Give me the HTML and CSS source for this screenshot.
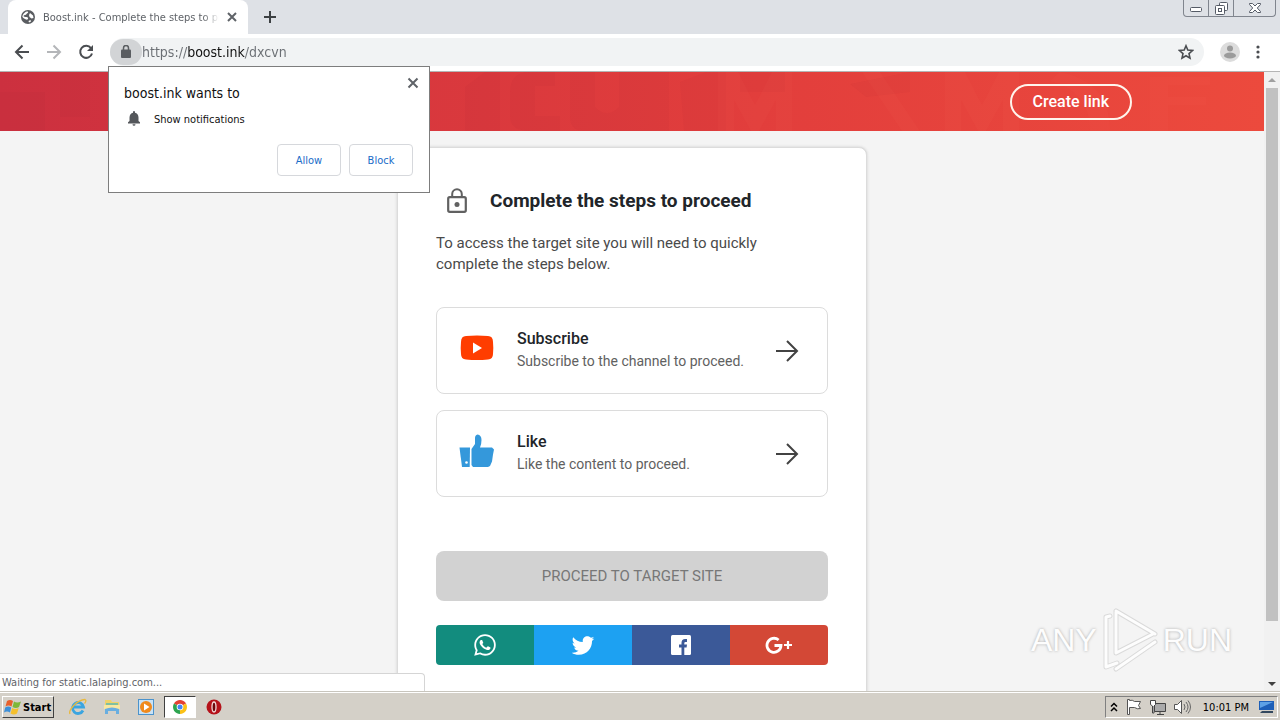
FILE: index.html
```html
<!DOCTYPE html>
<html lang="en">

<head>
  <meta charset="UTF-8">
  <meta name="viewport" content="width=device-width, initial-scale=1.0">
  <title>Boost.ink - Complete the steps to proceed</title>
  <link rel="stylesheet" href="styles.css">
</head>

<body>
  <header class="tabstrip">
    <div class="tab">
      <svg class="favicon" viewBox="0 0 14 14"><circle cx="7" cy="7" r="7" fill="#5a5d61"/><path d="M6 1.500c2 0 1 1.500 0 2s-.5 1.500-2 1.500S2 6.500 3.500 6.800s3 0 3.500 1.200-1 2-2 1.500S2 8 1.500 7 3 2 6 1.500zM9 3l3 2.500.5 2.500-2 .5L8.500 7 8 5zM7.500 11l2-1 .5 1.500-2 1z" fill="#fff"/></svg>
      <span class="tab-title">Boost.ink - Complete the steps to proceed</span>
      <button class="icon-btn" aria-label="Close tab"><svg width="10" height="10" viewBox="0 0 10 10"><path d="M1 1l8 8M9 1l-8 8" stroke="#5f6368" stroke-width="2"/></svg></button>
    </div>
    <button class="icon-btn new-tab" aria-label="New tab"><svg width="12" height="12" viewBox="0 0 12 12"><path d="M6 0v12M0 6h12" stroke="#3c4043" stroke-width="2"/></svg></button>
    <div class="window-btns">
      <button class="win-btn" aria-label="Minimize"><svg width="12" height="10" viewBox="0 0 12 10"><rect x=".5" y="4.500" width="11" height="4" rx="1" fill="#fff" stroke="#555b66"/></svg></button>
      <button class="win-btn" aria-label="Restore"><svg width="13" height="13" viewBox="0 0 13 13"><g fill="#fff" stroke="#555b66"><rect x="4.500" y=".5" width="8" height="8" rx="1"/><rect x=".5" y="3.500" width="9" height="9" rx="1"/><rect x="3.500" y="6.500" width="3" height="3"/></g></svg></button>
      <button class="win-btn win-close" aria-label="Close"><svg width="12" height="12" viewBox="0 0 12 12"><path d="M.5 1.500h3L6 4l2.500-2.500h3v1L8.300 6l3.200 3.500v1h-3L6 8l-2.500 2.500h-3v-1L3.700 6 .5 2.500z" fill="#fff" stroke="#555b66"/></svg></button>
    </div>
  </header>

  <nav class="toolbar">
    <button class="icon-btn" aria-label="Back"><svg width="16" height="16" viewBox="0 0 16 16"><path d="M15 8H2M8.500 1.500L2 8l6.500 6.500" fill="none" stroke="#4a4d51" stroke-width="2"/></svg></button>
    <button class="icon-btn" aria-label="Forward"><svg width="16" height="16" viewBox="0 0 16 16"><path d="M1 8h13M7.500 1.500L14 8l-6.500 6.500" fill="none" stroke="#b4b6b9" stroke-width="2"/></svg></button>
    <button class="icon-btn" aria-label="Reload"><svg width="16" height="16" viewBox="0 0 16 16"><path d="M13 4.200A6 6 0 1 0 14 9.500" fill="none" stroke="#4a4d51" stroke-width="2"/><path d="M15 1v6H9z" fill="#4a4d51"/></svg></button>
    <div class="omnibox">
      <button class="site-info" aria-label="View site information"><svg width="10" height="13" viewBox="0 0 10 13"><rect y="4.500" width="10" height="8.500" rx="1" fill="#5a5d61"/><path d="M2.500 5V3a2.500 2.500 0 0 1 5 0v2" fill="none" stroke="#5a5d61" stroke-width="1.500"/></svg></button>
      <input class="url" type="text" value="https://boost.ink/dxcvn" aria-label="Address">
      <button class="icon-btn" aria-label="Bookmark this page"><svg width="16" height="16" viewBox="0 0 16 16"><path d="M8 1.800l1.800 4.300 4.700.4-3.500 3.100 1 4.600L8 11.800l-4 2.400 1-4.600L1.500 6.500l4.700-.4z" fill="none" stroke="#4a4d51" stroke-width="1.600"/></svg></button>
    </div>
    <button class="icon-btn" aria-label="Profile"><svg width="20" height="20" viewBox="0 0 20 20"><circle cx="10" cy="10" r="10" fill="#dcdcdc"/><circle cx="10" cy="6.500" r="3" fill="#9b9b9b"/><ellipse cx="10" cy="13.500" rx="6" ry="3" fill="#9b9b9b"/></svg></button>
    <button class="icon-btn" aria-label="Menu"><svg width="4" height="14" viewBox="0 0 4 14"><g fill="#4a4d51"><circle cx="2" cy="2" r="1.600"/><circle cx="2" cy="7" r="1.600"/><circle cx="2" cy="12" r="1.600"/></g></svg></button>

    <div class="permission" role="dialog" aria-label="boost.ink wants to show notifications">
      <div class="permission-head">
        <span>boost.ink wants to</span>
        <button class="icon-btn permission-close" aria-label="Close"><svg width="12" height="12" viewBox="0 0 12 12"><path d="M1.500 1.500l9 9M10.500 1.500l-9 9" stroke="#5f6368" stroke-width="2"/></svg></button>
      </div>
      <div class="permission-row">
        <svg width="14" height="16" viewBox="0 0 14 16"><path d="M1 12.500v-1.200L2.500 10V6.500C2.500 4 4 2.300 6 1.800V1a1 1 0 0 1 2 0v.8c2 .5 3.500 2.200 3.500 4.700V10l1.500 1.300v1.200zM5.500 13.300h3a1.500 1.500 0 0 1-3 0z" fill="#54575b"/></svg>
        <span>Show notifications</span>
      </div>
      <div class="permission-actions">
        <button class="permission-btn">Allow</button>
        <button class="permission-btn">Block</button>
      </div>
    </div>
  </nav>

  <div class="viewport">
    <main class="page">
      <div class="banner">
        <svg class="banner-art" viewBox="0 0 1264 59" preserveAspectRatio="none"><g fill="#7d1028" opacity=".04"><path d="M0 20h45v39H0zM60 0h30v45H60zM465 59V15l20-15h15v59zM510 20q0-20 20-20h25v14h-20v30h25v15h-30q-20 0-20-15zM570 0h25v35q12 12 24 0V0h50v59h-85q-14 0-14-15zM680 10l26-10h20v59h-42zM740 0h45v20h-45zM850 12l60-12v20l-44 5z"/></g><g fill="#ff7a60" opacity=".06"><path d="M718 0h20l17 33L772 0h20v59h-16V28l-17 31h-8l-17-31v31h-16zM945 0h20l17 33L999 0h20v59h-16V28l-17 31h-8l-17-31v31h-16zM880 0l40 59h-18L862 0zM1060 0q50 10 50 59h-20q0-40-40-50zM1150 5h60v8h-42v12h38v8h-38v26h-18z"/></g></svg>
        <div class="container">
          <a class="create-link" href="#">Create link</a>
        </div>
      </div>

      <section class="card">
        <div class="card-head">
          <svg width="22" height="26" viewBox="0 0 22 26"><rect x="2.200" y="9.200" width="17.600" height="14.600" rx="1.500" fill="none" stroke="#616161" stroke-width="2.200"/><path d="M6.200 9V6a4.800 4.800 0 0 1 9.600 0v3" fill="none" stroke="#616161" stroke-width="2"/><circle cx="11" cy="16.500" r="2.500" fill="#616161"/></svg>
          <h1>Complete the steps to proceed</h1>
        </div>
        <p class="intro">To access the target site you will need to quickly complete the steps below.</p>

        <a class="step" href="#">
          <svg class="step-icon" viewBox="0 0 36 36"><path d="M7 6Q18 5 29 6q5 0 5 6 .6 6 0 12 0 5-5 5.500-11 1-22 0-5-.5-5-5.500-.6-6 0-12 0-6 5-6z" fill="#ff3d00"/><path d="M14 12.500v11l9-5.500z" fill="#fff"/></svg>
          <span class="step-text">
            <strong>Subscribe</strong>
            <span>Subscribe to the channel to proceed.</span>
          </span>
          <svg class="arrow" viewBox="0 0 24 24"><path d="M1 12h21M12 2l10 10-10 10" fill="none" stroke="#424242" stroke-width="2"/></svg>
        </a>
        <a class="step" href="#">
          <svg class="step-icon" viewBox="0 0 36 36"><path d="M.5 14.500H11l-.3 19.500H3z" fill="#3498db"/><path d="M12.500 16l3.500-5V5q0-3 2.500-3.500 4 .5 4 5.500 0 4-1.500 7.500h12l2 2-1 5-1 7-2 4.500-2 1H14l-1.500-2z" fill="#3498db"/><circle cx="7.500" cy="29.500" r="1.300" fill="#fff"/></svg>
          <span class="step-text">
            <strong>Like</strong>
            <span>Like the content to proceed.</span>
          </span>
          <svg class="arrow" viewBox="0 0 24 24"><path d="M1 12h21M12 2l10 10-10 10" fill="none" stroke="#424242" stroke-width="2"/></svg>
        </a>

        <button class="proceed" disabled>PROCEED TO TARGET SITE</button>

        <div class="share">
          <a class="whatsapp" href="#" aria-label="Share on WhatsApp"><svg width="26" height="26" viewBox="0 0 24 24"><path fill="#fff" d="M12.040 2C6.580 2 2.130 6.450 2.130 11.910C2.130 13.660 2.590 15.360 3.450 16.860L2.050 22L7.300 20.620C8.750 21.410 10.380 21.830 12.040 21.830C17.500 21.830 21.950 17.380 21.950 11.920C21.950 9.270 20.920 6.780 19.050 4.910C17.180 3.030 14.690 2 12.040 2M12.050 3.670C14.250 3.670 16.310 4.530 17.870 6.090C19.420 7.650 20.280 9.720 20.280 11.920C20.280 16.460 16.580 20.150 12.040 20.150C10.560 20.150 9.110 19.760 7.850 19L7.550 18.830L4.430 19.650L5.260 16.610L5.060 16.290C4.240 15 3.800 13.470 3.800 11.910C3.810 7.370 7.500 3.670 12.050 3.670M8.530 7.330C8.370 7.330 8.100 7.390 7.870 7.640C7.650 7.890 7 8.500 7 9.710C7 10.930 7.890 12.100 8 12.270C8.140 12.440 9.760 14.940 12.250 16C12.840 16.270 13.300 16.420 13.660 16.530C14.250 16.720 14.790 16.690 15.220 16.630C15.700 16.560 16.680 16.030 16.890 15.450C17.100 14.870 17.100 14.380 17.040 14.270C16.970 14.170 16.810 14.110 16.560 14C16.310 13.860 15.090 13.260 14.870 13.180C14.640 13.100 14.500 13.060 14.310 13.300C14.150 13.550 13.670 14.110 13.530 14.270C13.380 14.440 13.240 14.460 13 14.340C12.740 14.210 11.940 13.950 11 13.110C10.260 12.450 9.770 11.640 9.620 11.390C9.500 11.150 9.610 11 9.730 10.890C9.840 10.780 10 10.600 10.100 10.450C10.230 10.310 10.270 10.200 10.350 10.040C10.430 9.870 10.390 9.730 10.330 9.610C10.270 9.500 9.770 8.260 9.560 7.770C9.360 7.290 9.160 7.350 9 7.340C8.860 7.340 8.700 7.330 8.530 7.330Z"/></svg></a>
          <a class="twitter" href="#" aria-label="Share on Twitter"><svg width="26" height="26" viewBox="0 0 24 24"><path fill="#fff" d="M22.460 6c-.77.35-1.600.58-2.460.69.88-.53 1.560-1.370 1.880-2.380-.83.5-1.750.85-2.720 1.050C18.370 4.500 17.260 4 16 4c-2.350 0-4.270 1.920-4.270 4.290 0 .34.04.67.11.98C8.280 9.090 5.110 7.380 3 4.790c-.37.63-.58 1.370-.58 2.150 0 1.490.75 2.810 1.910 3.560-.71 0-1.370-.2-1.950-.5v.03c0 2.080 1.480 3.820 3.440 4.210a4.220 4.220 0 0 1-1.930.07 4.280 4.280 0 0 0 4 2.980 8.520 8.520 0 0 1-5.330 1.840c-.34 0-.68-.02-1.020-.06C3.440 20.290 5.700 21 8.120 21 16 21 20.330 14.460 20.330 8.790c0-.19 0-.37-.01-.56.84-.6 1.560-1.360 2.140-2.230z"/></svg></a>
          <a class="facebook" href="#" aria-label="Share on Facebook"><svg width="20" height="20" viewBox="0 0 20 20"><rect width="20" height="20" rx="1.500" fill="#fff"/><path d="M10.500 20v-7.500H8V9.500h2.500V7.800Q10.500 4 14.200 4H16v3h-1.500q-1.200 0-1.200 1.300v1.200H16l-.4 3h-2.300V20z" fill="#3b5998"/></svg></a>
          <a class="google" href="#" aria-label="Share on Google+"><svg width="28" height="18" viewBox="0 0 28 18"><path d="M13.600 4A7 7 0 1 0 16 9.500H9.500" fill="none" stroke="#fff" stroke-width="2.800"/><path d="M23 5v8M19 9h8" stroke="#fff" stroke-width="2.200"/></svg></a>
        </div>
      </section>
    </main>

    <div class="scrollbar">
      <svg width="16" height="16" viewBox="0 0 16 16"><path d="M4 10l4-4 4 4z" fill="#a0a0a0"/></svg>
      <div class="thumb"></div>
      <svg width="16" height="16" viewBox="0 0 16 16"><path d="M4 6l4 4 4-4z" fill="#404040"/></svg>
    </div>

    <div class="status">Waiting for static.lalaping.com...</div>

    <div class="watermark">
      <span>ANY</span>
      <svg width="58" height="64" viewBox="0 0 58 64"><g fill="none" stroke-linecap="round" stroke-linejoin="round"><path d="M5 9v50L16 55M15 3L54 26M15 3v42L52 26M15 61L54 34M5 9L9 8" stroke="#dadada" stroke-width="5"/><path d="M5 9v50L16 55M15 3L54 26M15 3v42L52 26M15 61L54 34M5 9L9 8" stroke="#fdfdfd" stroke-width="3"/></g></svg>
      <span>RUN</span>
    </div>
  </div>

  <footer class="taskbar">
    <button class="start"><svg width="18" height="16" viewBox="0 0 18 16"><path d="M3 2q3-2 6 0L7.500 7.500q-3-2-6 0z" fill="#e8602c"/><path d="M10 2.500q3 2 7 0L15 8q-3 2-6.500 0z" fill="#7eb83a"/><path d="M1.200 8.500q3-2 6 0L6 13.500q-3-2-6 0z" fill="#3c8fd8"/><path d="M8.200 9q3 2 6.500 0L13 14.500q-3 2-6.500 0z" fill="#f5c02c"/></svg>Start</button>
    <button class="task" aria-label="Internet Explorer"><svg width="18" height="18" viewBox="0 0 18 18"><path d="M14 12.500A5.500 5.500 0 1 1 14.500 9H5" fill="none" stroke="#3ba5e0" stroke-width="2.800"/><path d="M1 16C-1 12 8 2 16 1.500q2 1-.5 4" fill="none" stroke="#e9b93c" stroke-width="1.300"/></svg></button>
    <button class="task" aria-label="Explorer"><svg width="18" height="16" viewBox="0 0 18 16"><path d="M2 1h6l1 2h7v9H2z" fill="#efd26a"/><path d="M3 4h12v3H3z" fill="#7fc0a0"/><path d="M1 6h16v4H1z" fill="#f8e7a0"/><path d="M2 15V10q7-3 14 0v5h-3v-3H5v3z" fill="#69aee0"/></svg></button>
    <button class="task" aria-label="Media Player"><svg width="16" height="16" viewBox="0 0 16 16"><rect x=".5" y=".5" width="15" height="15" fill="#c9e2f5" stroke="#4b93cc"/><circle cx="8" cy="8" r="6" fill="#f08a1c"/><path d="M6 4.500v7L11.500 8z" fill="#fff"/></svg></button>
    <button class="task active" aria-label="Chrome"><svg width="14" height="14" viewBox="0 0 14 14"><path d="M7 7L.94 3.500A7 7 0 0 1 13.060 3.500z" fill="#e34133"/><path d="M7 7l6.060-3.500A7 7 0 0 1 7 14z" fill="#fbc116"/><path d="M7 7v7A7 7 0 0 1 .94 3.500z" fill="#2da44f"/><circle cx="7" cy="7" r="3.300" fill="#fff"/><circle cx="7" cy="7" r="2.500" fill="#4285f4"/></svg></button>
    <button class="task" aria-label="Opera"><svg width="16" height="16" viewBox="0 0 16 16"><circle cx="8" cy="8" r="7.500" fill="#b5121a"/><ellipse cx="8" cy="8" rx="2" ry="5" fill="#6d060b" stroke="#f2dada" stroke-width="1.300"/></svg></button>
    <div class="tray">
      <svg width="8" height="10" viewBox="0 0 8 10"><path d="M1 4.500l3-3 3 3M1 9l3-3 3 3" fill="none" stroke="#000" stroke-width="1.500"/></svg>
      <svg width="16" height="16" viewBox="0 0 16 16"><path d="M1.500 15.500v-15h2v1q3-1 5 1h6l-2 4 2 3q-3 1-6-1h-5v7z" fill="#fff" stroke="#555"/></svg>
      <svg width="16" height="16" viewBox="0 0 16 16"><path d="M4.500 4.500h11v8h-11z" fill="#aaa" stroke="#444"/><path d="M7 15.500h7M10 13v2" stroke="#444"/><path d="M.5 1.500h5v4l-1.500 1.500v7H2.500V7L.5 5.500z" fill="#fff" stroke="#444"/></svg>
      <svg width="17" height="16" viewBox="0 0 17 16"><path d="M.5 5.500h3l4-4v13l-4-4h-3z" fill="#fff" stroke="#555"/><path d="M10 5q2 3 0 6M12 3q4 5 0 10M14 1.500q5 6.500 0 13" fill="none" stroke="#666"/></svg>
      <time>10:01 PM</time>
      <svg width="16" height="14" viewBox="0 0 16 14"><path d="M0 1h15v9H0z" fill="#1d5fb8"/><path d="M1 2h13L1 8z" fill="#5da1e6"/><path d="M3 11h11v2H1z" fill="#33485e"/></svg>
    </div>
  </footer>
</body>

</html>
```
FILE: styles.css
```css
* {
  box-sizing: border-box;
  margin: 0;
  padding: 0;
}
body {
  display: flex;
  flex-direction: column;
  height: 100vh;
  overflow: hidden;
  font-family: "DejaVu Sans Condensed", "DejaVu Sans", sans-serif;
  font-size: 11px;
}
button {
  font: inherit;
  cursor: pointer;
}
a {
  color: inherit;
  text-decoration: none;
}
svg {
  display: block;
  flex-shrink: 0;
}
.icon-btn {
  display: flex;
  border: 0;
  background: none;
}

/* tabs */
.tabstrip {
  display: flex;
  align-items: flex-end;
  height: 34px;
  padding-left: 8px;
  background: #dee1e6;
}
.tab {
  display: flex;
  align-items: center;
  gap: 8px;
  width: 240px;
  height: 34px;
  padding: 0 11px 0 13px;
  border-radius: 8px 8px 0 0;
  background: #fff;
}
.favicon {
  width: 14px;
  height: 14px;
}
.tab-title {
  flex: 1;
  overflow: hidden;
  white-space: nowrap;
  color: #5f6368;
  -webkit-mask-image: linear-gradient(to left, transparent, #000 16px);
  mask-image: linear-gradient(to left, transparent, #000 16px);
}
.new-tab {
  padding: 11px 16px;
}
.window-btns {
  display: flex;
  align-self: flex-start;
  margin-left: auto;
  margin-right: 4px;
  border: 1px solid #80858e;
  border-top: 0;
  border-radius: 0 0 4px 4px;
}
.win-btn {
  display: flex;
  align-items: center;
  justify-content: center;
  width: 25px;
  height: 16px;
  border: 0;
  border-right: 1px solid #80858e;
  background: none;
}
.win-close {
  width: 41px;
  border-right: 0;
}

/* toolbar */
.toolbar {
  position: relative;
  z-index: 2;
  display: flex;
  align-items: center;
  gap: 16px;
  height: 38px;
  padding: 0 20px 2px 14px;
  border-bottom: 1px solid #b5b5b5;
  background: #fff;
}
.omnibox {
  display: flex;
  flex: 1;
  align-items: center;
  height: 28px;
  padding-right: 10px;
  border-radius: 14px;
  background: #f1f3f4;
}
.site-info {
  display: flex;
  align-items: center;
  justify-content: center;
  width: 32px;
  height: 26px;
  border: 0;
  border-radius: 13px;
  background: #d2d4d6;
}
/* host name is darker than the rest of the address */
.url {
  flex: 1;
  border: 0;
  outline: 0;
  font: 14px "DejaVu Sans Condensed", "DejaVu Sans", sans-serif;
  color: transparent;
  background: linear-gradient(to right, #6a6e73 46px, #111 46px, #111 103px, #6a6e73 103px);
  -webkit-background-clip: text;
  background-clip: text;
}

/* permission popup */
.permission {
  position: absolute;
  top: 32px;
  left: 108px;
  width: 322px;
  padding: 16px 16px 16px 15px;
  border: 1px solid #7d7d7d;
  background: #fff;
  color: #111;
}
.permission-head {
  display: flex;
  justify-content: space-between;
  font-size: 14px;
  line-height: 20px;
}
.permission-close {
  height: 12px;
  margin-top: -6px;
  margin-right: -6px;
}
.permission-row {
  display: flex;
  align-items: center;
  gap: 13px;
  margin-top: 8px;
  padding-left: 3px;
}
.permission-actions {
  display: flex;
  justify-content: flex-end;
  gap: 8px;
  margin-top: 17px;
}
.permission-btn {
  width: 64px;
  height: 32px;
  border: 1px solid #d6d8dc;
  border-radius: 4px;
  background: #fff;
  color: #1a6cc8;
}

/* page */
.viewport {
  position: relative;
  display: flex;
  flex: 1;
  min-height: 0;
  background: #f4f4f4;
}
.page {
  flex: 1;
  overflow: hidden;
  font-family: Roboto, sans-serif;
}
.banner {
  position: relative;
  background: linear-gradient(to right, #cc303f, #e23e3c 60%, #ec4a3d);
}
.banner-art {
  position: absolute;
  width: 100%;
  height: 100%;
}
.container {
  position: relative;
  display: flex;
  justify-content: flex-end;
  max-width: 1000px;
  margin: 0 auto;
  padding: 12px 0 11px;
}
.create-link {
  padding: 0 21px;
  border: 2px solid #fff4ec;
  border-radius: 18px;
  color: #fff;
  font-size: 16px;
  font-weight: 500;
  line-height: 32px;
}
.card {
  max-width: 470px;
  margin: 16px auto 0;
  padding: 40px 38px 60px;
  border: 1px solid #dcdcdc;
  border-radius: 8px;
  background: #fff;
  box-shadow: 0 0 3px #ccc;
}
.card-head {
  display: flex;
  align-items: center;
  gap: 22px;
  padding-left: 10px;
}
.card-head h1 {
  color: #212529;
  font-size: 19px;
  font-weight: 700;
  line-height: 26px;
}
.intro {
  margin: 19px 0 32px;
  padding-right: 40px;
  color: #4a4a4a;
  font-size: 15px;
  line-height: 21px;
}
.step {
  display: flex;
  align-items: center;
  gap: 22px;
  height: 87px;
  margin-bottom: 16px;
  padding: 0 28px 0 22px;
  border: 1px solid #dcdcdc;
  border-radius: 8px;
}
.step-icon {
  width: 36px;
  height: 36px;
  margin-bottom: 6px;
}
.step-text {
  display: flex;
  flex: 1;
  flex-direction: column;
  margin-bottom: 2px;
  color: #616161;
  font-size: 14px;
  line-height: 22px;
}
.step-text strong {
  color: #212529;
  font-size: 16px;
  font-weight: 500;
}
.arrow {
  width: 24px;
  height: 24px;
}
.proceed {
  width: 100%;
  height: 50px;
  margin: 38px 0 24px;
  border: 0;
  border-radius: 8px;
  background: #d2d2d2;
  color: #777;
  font-size: 15px;
}
.share {
  display: flex;
  height: 40px;
  overflow: hidden;
  border-radius: 4px;
}
.share a {
  display: flex;
  flex: 1;
  align-items: center;
  justify-content: center;
}
.whatsapp {
  background: #128c7e;
}
.twitter {
  background: #1da1f2;
}
.facebook {
  background: #3b5998;
}
.google {
  background: #d34836;
}

/* scrollbar */
.scrollbar {
  display: flex;
  flex-direction: column;
  width: 16px;
  background: #f1f1f1;
}
.thumb {
  width: 12px;
  height: 86%;
  margin: 0 auto auto;
  background: #c1c1c1;
}

/* things lying over the page */
.status {
  position: absolute;
  bottom: 0;
  left: 0;
  width: 425px;
  padding: 0 2px;
  border: 1px solid #d5d5d5;
  border-width: 1px 1px 0 0;
  border-radius: 0 4px 0 0;
  background: #fff;
  color: #5f6368;
  line-height: 18px;
}
.watermark {
  position: absolute;
  right: 48px;
  bottom: 20px;
  display: flex;
  align-items: center;
  gap: 4px;
  color: #fdfdfd;
  font: 32px "Liberation Sans", sans-serif;
  text-shadow: 0 0 3px #aaa;
}

/* taskbar */
.taskbar {
  display: flex;
  align-items: center;
  height: 28px;
  padding: 1px 2px 0;
  border-top: 1px solid #fff;
  background: #d4d0c8;
  box-shadow: 0 -1px #c8c5bd;
  z-index: 1;
}
.start {
  display: flex;
  align-items: center;
  gap: 1px;
  height: 22px;
  margin-right: 8px;
  padding: 0 2px 0 1px;
  border: 1px solid;
  border-color: #fff #404040 #404040 #fff;
  background: #d4d0c8;
  font-weight: bold;
}
.task {
  display: flex;
  align-items: center;
  justify-content: center;
  width: 32px;
  height: 22px;
  margin-right: 2px;
  border: 0;
  background: none;
}
.task.active {
  border: 1px solid;
  border-color: #404040 #fff #fff #404040;
  background: #fff;
}
.tray {
  display: flex;
  align-items: center;
  gap: 8px;
  height: 22px;
  margin-left: auto;
  padding: 0 2px 0 4px;
  border: 1px solid;
  border-color: #808080 #fff #fff #808080;
}
.tray time {
  padding: 0 2px 0 4px;
}
```
